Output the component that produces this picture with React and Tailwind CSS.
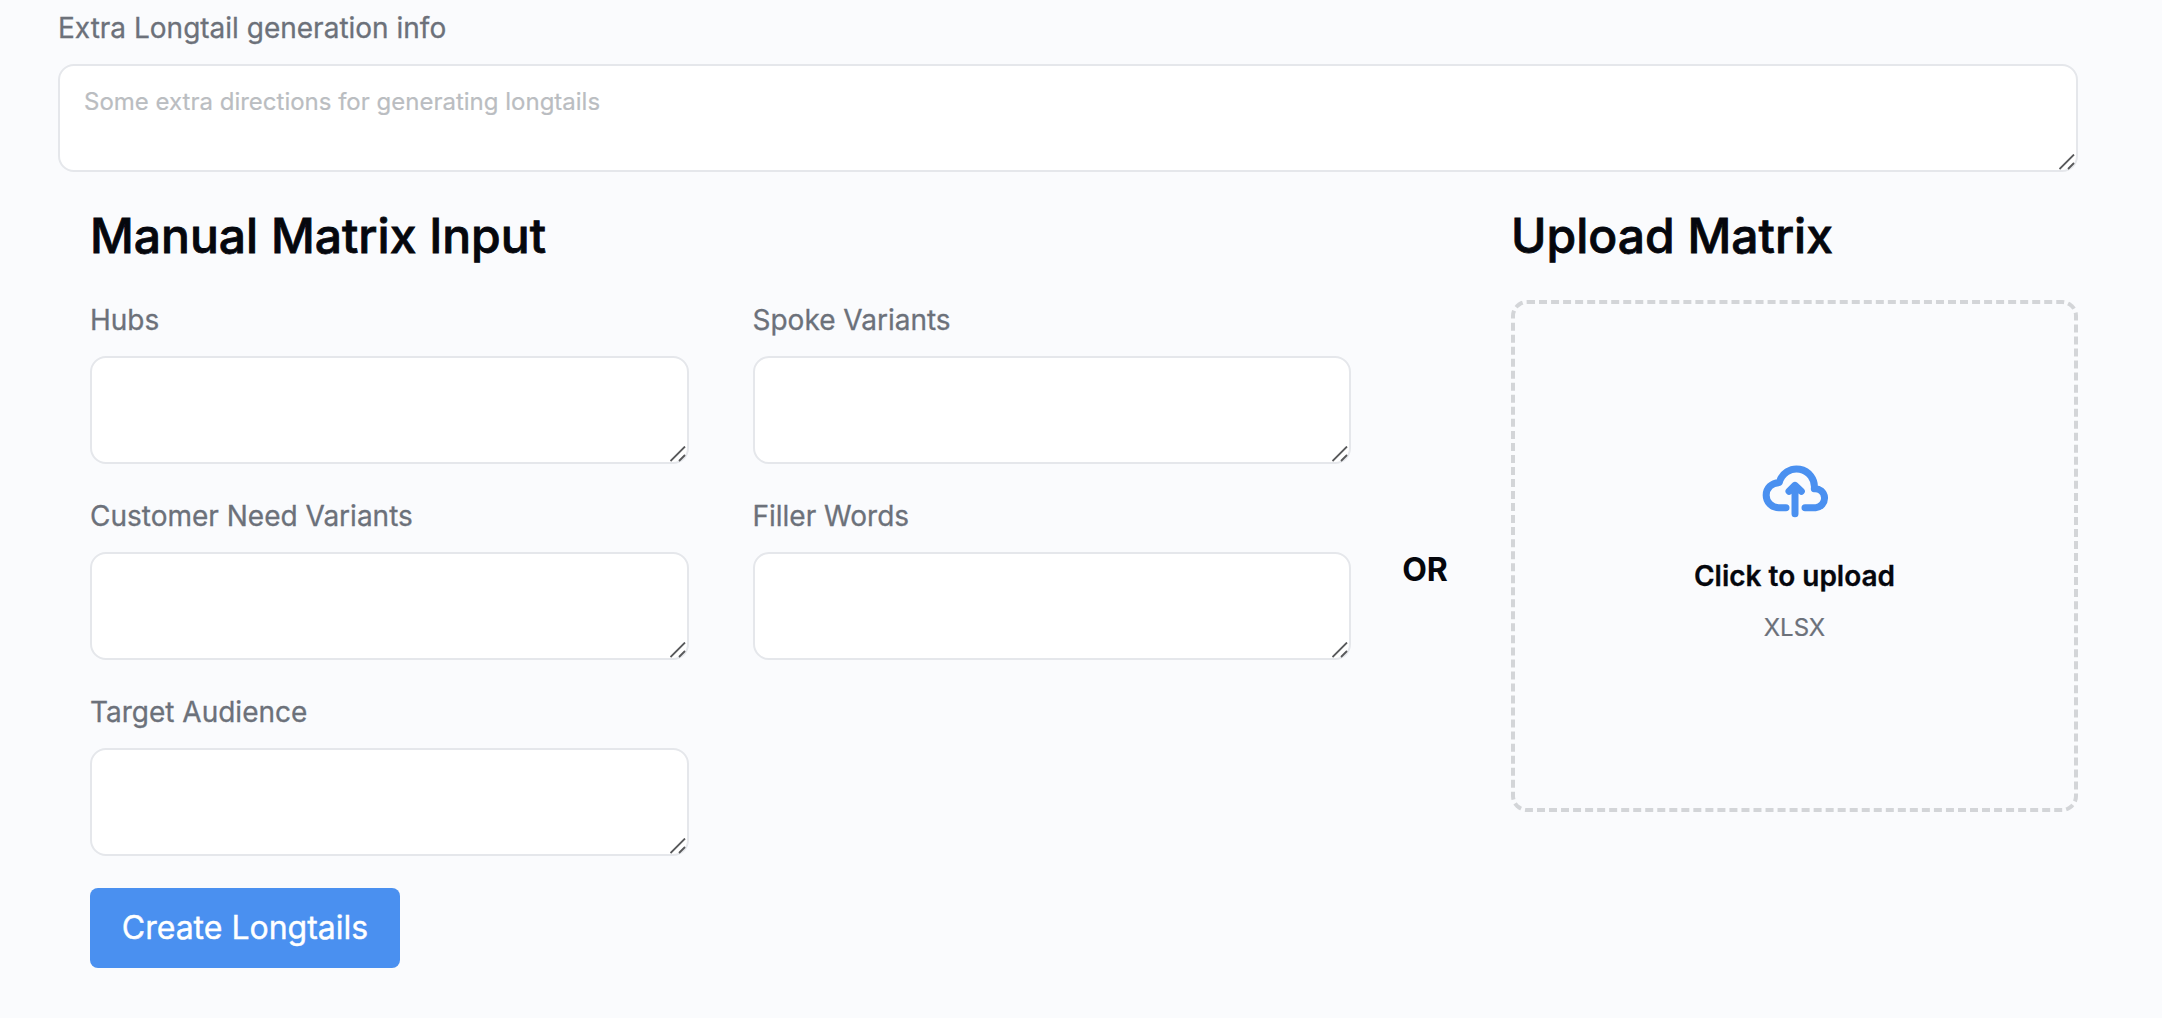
import React from "react";

function Field({ label, placeholder, className = "" }) {
  return (
    <label className={`flex flex-col ${className}`}>
      <span className="mb-4 text-[28px] leading-10 text-[#6c717a] [-webkit-text-stroke:0.3px]">{label}</span>
      <span className="relative block h-[108px]">
        <textarea
          placeholder={placeholder}
          className="block h-full w-full resize-none rounded-2xl border-2 border-[#e5e7eb] bg-white px-6 py-4 text-2xl leading-10 placeholder:text-[#babdc1] outline-none [-webkit-text-stroke:0.2px]"
        />
        <svg className="absolute right-[3px] bottom-[2px]" width="16" height="16" viewBox="0 0 16 16" fill="none" stroke="#58595b" strokeWidth="1.8">
          <path d="M0.5 15 15 0.5M9 15 15 9" />
        </svg>
      </span>
    </label>
  );
}

function CloudUpload() {
  return (
    <svg width="70" height="56" viewBox="300 70 210 168" fill="none" stroke="#4a90f0" strokeWidth="21" strokeLinecap="round" strokeLinejoin="round">
      <path d="M378 204H356a37.5 37.5 0 0 1 0-75l2-1A53.5 53.5 0 0 1 463 147a28.5 28.5 0 0 1 4 57H435" />
      <path d="M405 222V141M387 155 405 137 424 155" />
    </svg>
  );
}

export default function App() {
  return (
    <main className="h-[1018px] bg-[#fafbfd] pr-[84px] pl-[58px] pt-2 font-['Inter',sans-serif] text-[#05070d]">
      <Field label="Extra Longtail generation info" placeholder="Some extra directions for generating longtails" />
      <div className="flex pl-8">
        <section className="w-[1261px]">
          <h2 className="pt-8 text-5xl leading-[64px] font-medium [-webkit-text-stroke:0.8px]">Manual Matrix Input</h2>
          <div className="mt-8 grid grid-cols-2 gap-x-16 gap-y-8">
            <Field label="Hubs" />
            <Field label="Spoke Variants" />
            <Field label="Customer Need Variants" />
            <Field label="Filler Words" />
            <Field label="Target Audience" />
          </div>
          <button className="mt-8 h-20 w-[310px] rounded-lg bg-[#4a90f0] text-[32px] leading-10 text-white [-webkit-text-stroke:0.4px]">Create Longtails</button>
        </section>
        <div className="flex w-[160px] justify-center pt-[378px] pr-3 text-[32px] leading-10 font-bold">OR</div>
        <section className="flex-1">
          <h2 className="pt-8 text-5xl leading-[64px] font-medium [-webkit-text-stroke:0.8px]">Upload Matrix</h2>
          <div className="mt-8 flex h-[512px] flex-col items-center rounded-2xl border-4 border-dashed border-[#d3d5d8] pt-[159px]">
            <CloudUpload />
            <p className="mt-[37px] text-[28px] leading-10 font-semibold [-webkit-text-stroke:0.3px]">Click to upload</p>
            <p className="mt-3.5 text-2xl leading-9 text-[#6c717a] [-webkit-text-stroke:0.2px]">XLSX</p>
          </div>
        </section>
      </div>
    </main>
  );
}
